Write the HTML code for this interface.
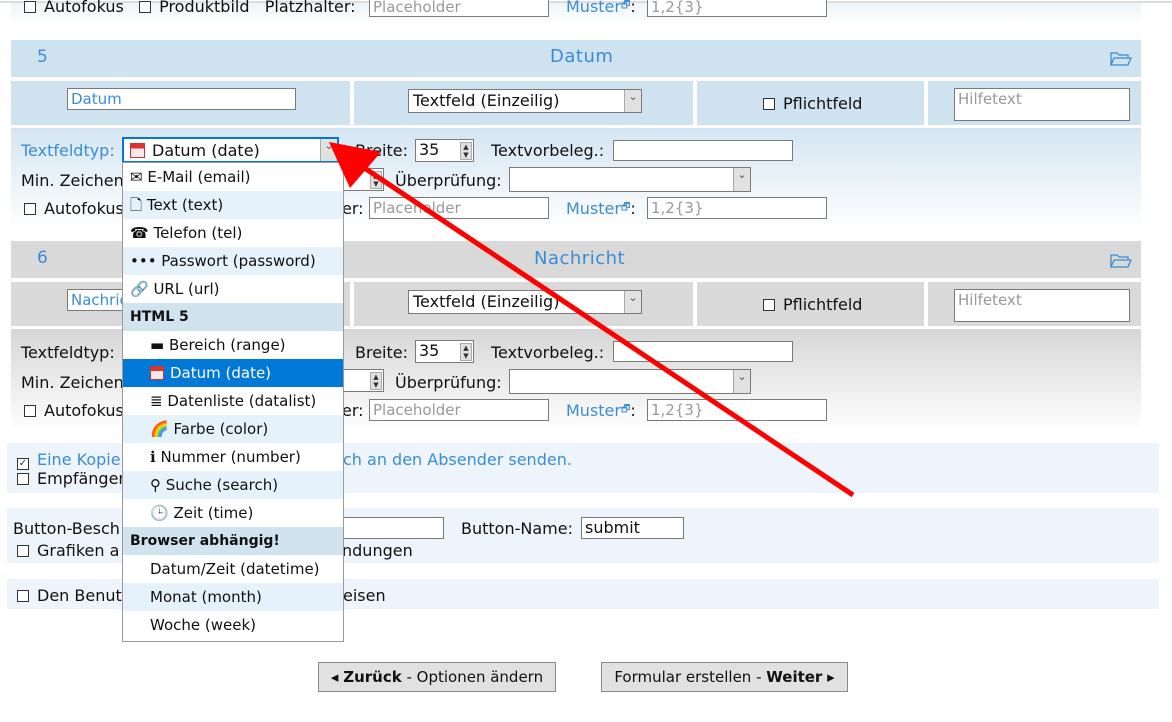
<!DOCTYPE html>
<html><head><meta charset="utf-8"><style>
*{box-sizing:border-box;margin:0;padding:0}
body{width:1172px;height:722px;position:relative;overflow:hidden;background:#fff;font-family:"DejaVu Sans","Liberation Sans",sans-serif;font-size:16px;color:#111}
.a{position:absolute;white-space:nowrap}
.in{position:absolute;background:#fff;border:1px solid #7a7a7a;font-size:15px;padding:1px 3px;line-height:18px;color:#999;overflow:hidden}
.sel{position:absolute;background:#fff;border:1px solid #7a7a7a;font-size:16px;padding:1px 4px;line-height:20px;color:#111}
.sel:after{content:"⌄";position:absolute;right:0;top:0;bottom:0;width:16px;background:#e1e1e1;border-left:1px solid #aaa;font-size:11px;text-align:center;line-height:14px;color:#555}
.cb{display:inline-block;width:12px;height:12px;border:1px solid #333;background:#fff;margin-right:8px;vertical-align:-1px}
.blue{color:#3a8dd4}
.dd{position:absolute;left:122px;top:162px;width:222px;height:480px;background:#fff;border:1px solid #9a9a9a;font-size:15px;overflow:hidden}
.dd div{height:28px;line-height:28px;padding-left:7px;white-space:nowrap}
.l{background:#e5f1fb}.h{background:#d2e3f0;font-weight:bold;font-size:14px}.s{background:#0078d7;color:#fff}
.i2{padding-left:27px!important}
.spin{position:absolute;right:1px;top:2px;width:12px;height:18px;background:#e1e1e1;border:1px solid #aaa;font-size:7px;line-height:8px;text-align:center;color:#333}
.fold{position:absolute;width:22px;height:15px}
</style></head><body>
<div class="a" style="left:0;top:1px;width:1172px;height:2px;background:#ddd"></div>
<div class="a" style="left:11px;top:3px;width:1130px;height:22px;background:linear-gradient(#eef4f9,#fff)"></div>
<div class="a" style="left:24px;top:-3px"><span class="cb"></span>Autofokus &nbsp; <span class="cb"></span>Produktbild &nbsp; Platzhalter:</div>
<div class="in" style="left:369px;top:-4px;width:180px;height:21px">Placeholder</div>
<div class="a blue" style="left:566px;top:-3px">Muster<span style="font-size:10px;vertical-align:4px">🗗</span><span style="color:#111">:</span></div>
<div class="in" style="left:647px;top:-4px;width:180px;height:21px">1,2{3}</div>

<!-- section 5 -->
<div class="a" style="left:11px;top:40px;width:1130px;height:37px;background:#cfe2f0"></div>
<div class="a blue" style="left:37px;top:47px;font-size:17px">5</div>
<div class="a blue" style="left:550px;top:46px;font-size:18px;letter-spacing:0.5px">Datum</div>
<svg class="fold" style="left:1110px;top:51px" viewBox="0 0 22 15"><path d="M1 14V2h6l2 2h9v3M1 14l3-7h17l-3 7z" fill="none" stroke="#3a8dd4" stroke-width="1.3"/></svg>
<div class="a" style="left:11px;top:81px;width:339px;height:44px;background:#cfe2f0"></div>
<div class="a" style="left:354px;top:81px;width:339px;height:44px;background:#cfe2f0"></div>
<div class="a" style="left:697px;top:81px;width:227px;height:44px;background:#cfe2f0"></div>
<div class="a" style="left:928px;top:81px;width:213px;height:44px;background:#cfe2f0"></div>
<div class="in" style="left:67px;top:88px;width:229px;height:22px;color:#3a8dd4">Datum</div>
<div class="sel" style="left:408px;top:89px;width:234px;height:24px">Textfeld (Einzeilig)</div>
<div class="a" style="left:763px;top:94px"><span class="cb"></span>Pflichtfeld</div>
<div class="in" style="left:954px;top:88px;width:176px;height:33px">Hilfetext</div>
<div class="a" style="left:11px;top:128px;width:1130px;height:102px;background:linear-gradient(#d4e5f2,#fff)"></div>
<div class="a blue" style="left:21px;top:141px">Textfeldtyp:</div>
<div class="a" style="left:355px;top:141px">Breite:</div>
<div class="in" style="left:415px;top:139px;width:59px;height:23px;color:#111;font-size:16px">35<span class="spin">▲<br>▼</span></div>
<div class="a" style="left:491px;top:141px">Textvorbeleg.:</div>
<div class="in" style="left:613px;top:140px;width:180px;height:21px"></div>
<div class="a" style="left:21px;top:171px">Min. Zeichen</div>
<div class="in" style="left:340px;top:168px;width:44px;height:23px"><span class="spin">▲<br>▼</span></div>
<div class="a" style="left:395px;top:171px">Überprüfung:</div>
<div class="sel" style="left:509px;top:167px;width:242px;height:25px"></div>
<div class="a" style="left:24px;top:199px"><span class="cb"></span>Autofokus</div>
<div class="a" style="left:342px;top:199px">er:</div>
<div class="in" style="left:369px;top:197px;width:180px;height:22px">Placeholder</div>
<div class="a blue" style="left:566px;top:199px">Muster<span style="font-size:10px;vertical-align:4px">🗗</span><span style="color:#111">:</span></div>
<div class="in" style="left:647px;top:197px;width:180px;height:22px">1,2{3}</div>

<!-- section 6 -->
<div class="a" style="left:11px;top:241px;width:1130px;height:37px;background:#d9d9d9"></div>
<div class="a blue" style="left:37px;top:248px;font-size:17px">6</div>
<div class="a blue" style="left:534px;top:248px;font-size:18px;letter-spacing:0.5px">Nachricht</div>
<svg class="fold" style="left:1110px;top:253px" viewBox="0 0 22 15"><path d="M1 14V2h6l2 2h9v3M1 14l3-7h17l-3 7z" fill="none" stroke="#3a8dd4" stroke-width="1.3"/></svg>
<div class="a" style="left:11px;top:282px;width:339px;height:44px;background:#d9d9d9"></div>
<div class="a" style="left:354px;top:282px;width:339px;height:44px;background:#d9d9d9"></div>
<div class="a" style="left:697px;top:282px;width:227px;height:44px;background:#d9d9d9"></div>
<div class="a" style="left:928px;top:282px;width:213px;height:44px;background:#d9d9d9"></div>
<div class="in" style="left:67px;top:289px;width:229px;height:22px;color:#3a8dd4">Nachricht</div>
<div class="sel" style="left:408px;top:290px;width:234px;height:24px">Textfeld (Einzeilig)</div>
<div class="a" style="left:763px;top:295px"><span class="cb"></span>Pflichtfeld</div>
<div class="in" style="left:954px;top:289px;width:176px;height:33px">Hilfetext</div>
<div class="a" style="left:11px;top:329px;width:1130px;height:102px;background:linear-gradient(#d6d6d6,#fff)"></div>
<div class="a" style="left:21px;top:343px">Textfeldtyp:</div>
<div class="a" style="left:355px;top:343px">Breite:</div>
<div class="in" style="left:415px;top:340px;width:59px;height:23px;color:#111;font-size:16px">35<span class="spin">▲<br>▼</span></div>
<div class="a" style="left:491px;top:343px">Textvorbeleg.:</div>
<div class="in" style="left:613px;top:341px;width:180px;height:21px"></div>
<div class="a" style="left:21px;top:373px">Min. Zeichen</div>
<div class="in" style="left:340px;top:369px;width:44px;height:23px"><span class="spin">▲<br>▼</span></div>
<div class="a" style="left:395px;top:373px">Überprüfung:</div>
<div class="sel" style="left:509px;top:369px;width:242px;height:25px"></div>
<div class="a" style="left:24px;top:401px"><span class="cb"></span>Autofokus</div>
<div class="a" style="left:342px;top:401px">er:</div>
<div class="in" style="left:369px;top:399px;width:180px;height:22px">Placeholder</div>
<div class="a blue" style="left:566px;top:401px">Muster<span style="font-size:10px;vertical-align:4px">🗗</span><span style="color:#111">:</span></div>
<div class="in" style="left:647px;top:399px;width:180px;height:22px">1,2{3}</div>

<!-- lower boxes -->
<div class="a" style="left:7px;top:443px;width:1152px;height:50px;background:#eef4fb"></div>
<div class="a blue" style="left:17px;top:450px"><span class="cb" style="text-align:center;font-size:10px;line-height:10px;color:#333">✓</span>Eine Kopie</div>
<div class="a blue" style="left:343px;top:450px">ch an den Absender senden.</div>
<div class="a" style="left:17px;top:469px"><span class="cb"></span>Empfänger</div>
<div class="a" style="left:7px;top:508px;width:1152px;height:55px;background:#eef4fb"></div>
<div class="a" style="left:13px;top:519px">Button-Besch</div>
<div class="in" style="left:340px;top:517px;width:104px;height:22px"></div>
<div class="a" style="left:461px;top:519px">Button-Name:</div>
<div class="in" style="left:581px;top:517px;width:103px;height:22px;color:#111;font-size:16px">submit</div>
<div class="a" style="left:17px;top:541px"><span class="cb"></span>Grafiken a</div>
<div class="a" style="left:342px;top:541px">ndungen</div>
<div class="a" style="left:7px;top:579px;width:1152px;height:30px;background:#eef4fb"></div>
<div class="a" style="left:17px;top:586px"><span class="cb"></span>Den Benut</div>
<div class="a" style="left:343px;top:586px">eisen</div>

<div class="a" style="left:318px;top:662px;width:238px;height:30px;background:#e1e1e1;border:1px solid #8a8a8a;line-height:28px;text-align:center;font-size:15px">◂ <b>Zurück</b> - Optionen ändern</div>
<div class="a" style="left:601px;top:662px;width:247px;height:30px;background:#e1e1e1;border:1px solid #8a8a8a;line-height:28px;text-align:center;font-size:15px">Formular erstellen - <b>Weiter</b> ▸</div>

<!-- open select -->
<div class="sel" style="left:122px;top:137px;width:217px;height:26px;border:2px solid #0078d7;padding-left:28px;line-height:21px"><span style="position:absolute;left:6px;top:4px;width:15px;height:15px;border:1px solid #c33;background:linear-gradient(#d33 0 35%,#f4eaea 35%)"></span>Datum (date)</div>
<div class="dd">
<div>✉ E-Mail (email)</div>
<div class="l">🗋 Text (text)</div>
<div>☎ Telefon (tel)</div>
<div class="l">••• Passwort (password)</div>
<div>🔗 URL (url)</div>
<div class="h">HTML 5</div>
<div class="i2">▬ Bereich (range)</div>
<div class="s i2"><span style="display:inline-block;width:14px;height:14px;border:1px solid #c33;background:linear-gradient(#d33 0 35%,#f4eaea 35%);vertical-align:-2px;margin-right:6px"></span>Datum (date)</div>
<div class="i2">≣ Datenliste (datalist)</div>
<div class="l i2">🌈 Farbe (color)</div>
<div class="i2">ℹ Nummer (number)</div>
<div class="l i2">⚲ Suche (search)</div>
<div class="i2">🕒 Zeit (time)</div>
<div class="h">Browser abhängig!</div>
<div class="i2">Datum/Zeit (datetime)</div>
<div class="l i2">Monat (month)</div>
<div class="i2">Woche (week)</div>
</div>

<svg class="a" style="left:0;top:0" width="1172" height="722">
<line x1="853" y1="495" x2="360" y2="165" stroke="#f00" stroke-width="5"/>
<polygon points="329,142 381,152 350,188" fill="#f00"/>
</svg>
</body></html>
